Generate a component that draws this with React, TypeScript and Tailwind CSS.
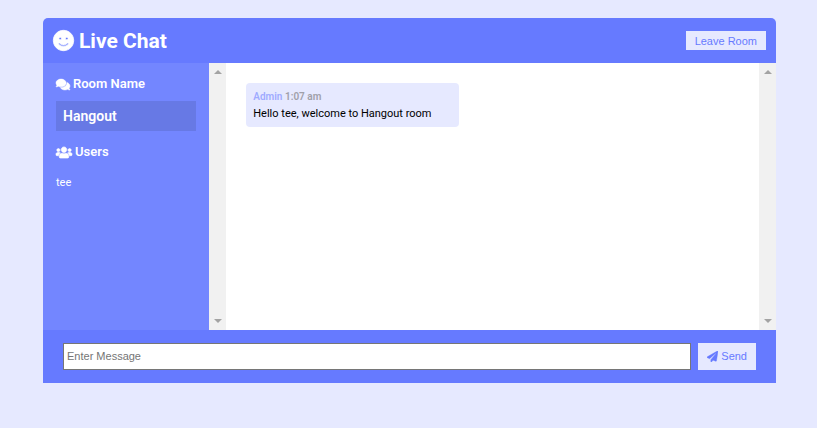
import { FaComments, FaPaperPlane, FaSmile, FaUsers } from 'react-icons/fa';

function ScrollTrack() {
  return (
    <div className="flex w-[17px] shrink-0 flex-col items-center justify-between bg-[#f1f1f1] py-[7px]" aria-hidden="true">
      <svg className="h-1 w-2" viewBox="0 0 8 4" fill="#a3a3a3">
        <path d="M4 0 8 4H0z" />
      </svg>
      <svg className="h-1 w-2" viewBox="0 0 8 4" fill="#a3a3a3">
        <path d="M0 0h8L4 4z" />
      </svg>
    </div>
  );
}

const users = ['tee'];

const messages = [{ author: 'Admin', time: '1:07 am', text: 'Hello tee, welcome to Hangout room' }];

export default function App() {
  return (
    <div className="min-h-screen bg-[#e6e9ff] pt-[18px] pr-[41px] pb-11 pl-[43px] font-[Roboto,sans-serif] text-[11px]">
      <div className="overflow-hidden rounded-t-[5px]">
        <header className="flex h-[45px] items-center justify-between bg-[#667aff] px-[10px] text-white">
          <h1 className="flex items-center gap-[5px] text-[21px] leading-7 font-bold">
            <FaSmile className="size-[21px] overflow-visible" strokeWidth={20} />
            Live Chat
          </h1>
          <button
            type="button"
            className="h-[19px] bg-[#e6e9ff] px-[9px] font-['Liberation_Sans',Arial,sans-serif] leading-4 text-[#667aff]"
          >
            Leave Room
          </button>
        </header>

        <main className="grid h-[267px] grid-cols-[1fr_3fr]">
          <aside className="flex bg-[#7386ff] text-white">
            <div className="min-w-0 flex-1 p-[13px]">
              <h3 className="flex items-center gap-[3px] text-[13px] leading-4 font-semibold">
                <FaComments className="h-[13px] w-[14px] overflow-visible" strokeWidth={20} />
                Room Name
              </h3>
              <h2 className="mt-[9px] mb-[13px] bg-[#6779e5] px-[7px] py-[7px] text-[14px] leading-4 font-semibold">Hangout</h2>
              <h3 className="flex items-center gap-[3px] text-[13px] leading-4 font-semibold">
                <FaUsers className="h-[13px] w-[16px] overflow-visible" strokeWidth={24} />
                Users
              </h3>
              <ul className="mt-[15px]">
                {users.map((user) => (
                  <li key={user} className="leading-4">
                    {user}
                  </li>
                ))}
              </ul>
            </div>
            <ScrollTrack />
          </aside>

          <section className="flex bg-white">
            <div className="min-w-0 flex-1 p-5">
              {messages.map((message) => (
                <article key={message.time} className="w-[213px] rounded-[4px] bg-[#e6e9ff] px-[7px] pt-[6px] pb-[5px] leading-4">
                  <p className="mb-px text-[10px] font-semibold text-[#9fabff]">
                    {message.author} <span className="text-[#a0a0aa]">{message.time}</span>
                  </p>
                  <p className="text-black">{message.text}</p>
                </article>
              ))}
            </div>
            <ScrollTrack />
          </section>
        </main>

        <footer className="bg-[#667aff] px-5 py-[13px]">
          <form className="flex gap-[7px] font-['Liberation_Sans',Arial,sans-serif]" onSubmit={(event) => event.preventDefault()}>
            <input
              type="text"
              aria-label="Message"
              placeholder="Enter Message"
              className="h-[27px] min-w-0 flex-1 border border-[#767676] bg-white px-[3px] pb-px text-black placeholder:text-[#757575]"
            />
            <button type="submit" className="flex h-[27px] items-center gap-[3px] bg-[#e6e9ff] px-[9px] text-[#667aff]">
              <FaPaperPlane className="size-[11px]" strokeWidth={16} />
              Send
            </button>
          </form>
        </footer>
      </div>
    </div>
  );
}
